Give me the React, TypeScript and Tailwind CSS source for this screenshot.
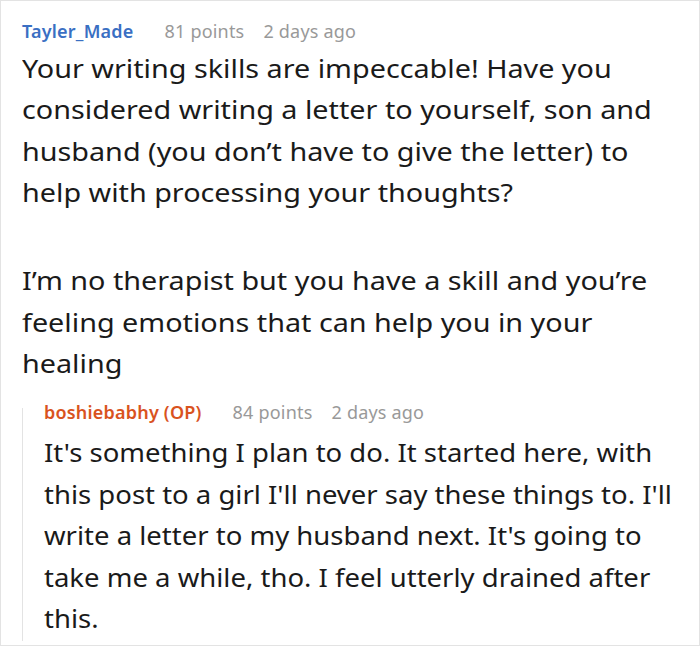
const FONT = "font-['Noto_Sans',sans-serif]";

type Meta = { name: string; nameColor: string; points: number; age: string };

function CommentHeader({ name, nameColor, points, age }: Meta) {
  return (
    <div className="flex items-baseline text-[18px] leading-[24px] tracking-[0.2px]">
      <span className={`font-semibold ${nameColor}`}>{name}</span>
      <span className="ml-[31px] text-[#999999]">{points} points</span>
      <span className="ml-[19px] text-[#999999]">{age}</span>
    </div>
  );
}

const mainLines = [
  'Your writing skills are impeccable! Have you',
  'considered writing a letter to yourself, son and',
  'husband (you don’t have to give the letter) to',
  'help with processing your thoughts?',
  '',
  'I’m no therapist but you have a skill and you’re',
  'feeling emotions that can help you in your',
  'healing',
];

const replyLines = [
  "It's something I plan to do. It started here, with",
  "this post to a girl I'll never say these things to. I'll",
  "write a letter to my husband next. It's going to",
  'take me a while, tho. I feel utterly drained after',
  'this.',
];

export default function App() {
  return (
    <div className={`${FONT} w-[700px] h-[646px] bg-white border border-[#e3e3e3] overflow-hidden`}>
      <div className="pl-[21px] pt-[18px]">
        <CommentHeader name="Tayler_Made" nameColor="text-[#3a6fc3]" points={81} age="2 days ago" />
        <div className="mt-[5px] text-[25px] leading-[41.4px] text-[#1a1a1a] whitespace-nowrap origin-left scale-x-[1.15]">
          {mainLines.map((l, i) =>
            l ? <div key={i}>{l}</div> : <div key={i} className="h-[46.5px]" />
          )}
        </div>
        <div className="mt-[16px] flex">
          <div className="w-[1px] bg-[#e3e3e3] mt-[8px] mb-[-2px]" />
          <div className="pl-[21px]">
            <CommentHeader name="boshiebabhy (OP)" nameColor="text-[#d9531e]" points={84} age="2 days ago" />
            <div className="mt-[8px] text-[25px] leading-[41.4px] text-[#1a1a1a] whitespace-nowrap origin-left scale-x-[1.1]">
              {replyLines.map((l, i) => (
                <div key={i}>{l}</div>
              ))}
            </div>
          </div>
        </div>
      </div>
    </div>
  );
}
